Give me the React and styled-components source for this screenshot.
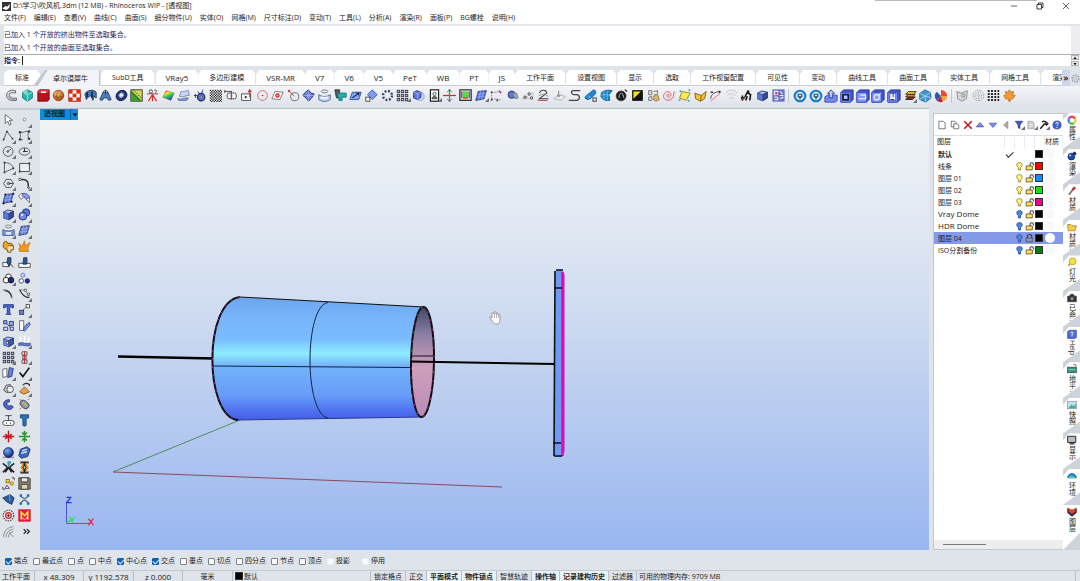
import React, { useState } from 'react';
import styled, { createGlobalStyle, css } from 'styled-components';

const GlobalStyle = createGlobalStyle`
  * {
    box-sizing: border-box;
  }

  body {
    margin: 0;
    overflow: hidden;
    font-family: 'Open Sans', 'Noto Sans CJK SC', sans-serif;
    font-size: 7px;
    line-height: 12px;
    color: #1c1c22;
  }

  button, input {
    font: inherit;
    color: inherit;
  }
`;

const Window = styled.div`
  display: flex;
  flex-direction: column;
  height: 100vh;
  background: #dfe3ea;
`;

const BareButton = styled.button`
  display: flex;
  align-items: center;
  justify-content: center;
  margin: 0;
  padding: 0;
  border: 0;
  background: none;
`;

/* Title bar and menu */

const TitleBar = styled.header`
  position: relative;
  display: flex;
  align-items: center;
  height: 12px;
  padding: 0 8px 0 2px;
  background: #fff;
`;

const Title = styled.h1`
  flex: 1;
  margin: 0 0 0 2px;
  font-size: 7px;
  font-weight: 400;
`;

const WindowButtons = styled.div`
  display: flex;
  gap: 14px;
`;

const Shade = styled.div`
  position: absolute;
  top: 0;
  left: 81%;
  width: 15%;
  height: 1px;
  background: #b9b9b9;
`;

const MenuBar = styled.nav`
  display: flex;
  gap: 8px;
  height: 14px;
  padding: 0 4px;
  border-bottom: 2px solid #e2e5e9;
  background: #fff;
`;

const MenuLink = styled.a`
  color: inherit;
  text-decoration: none;
  white-space: nowrap;
`;

/* Command area */

const CommandArea = styled.section`
  display: grid;
  grid-template-columns: 1fr 9px;
  margin-left: 4px;
  color: #1d2560;
  background: #fff;
`;

const History = styled.div`
  height: 28px;
  padding-top: 2px;
  line-height: 13px;
`;

const HistoryLine = styled.p`
  margin: 0;
`;

const HistoryScroll = styled.div`
  background: #ededef;
`;

const CommandRow = styled.label`
  display: flex;
  align-items: center;
  height: 12px;
  border-top: 1px solid #a9abb0;
  font-weight: 700;
`;

const CommandInput = styled.input`
  flex: 1;
  height: 9px;
  margin-left: 2px;
  padding: 0;
  border: 0;
  border-left: 1px solid #222;
  outline: 0;
`;

const Spinner = styled.div`
  display: flex;
  flex-direction: column;
  gap: 1px;
  padding: 0 1px 0 0;
  border-top: 1px solid #a9abb0;
`;

const SpinButton = styled(BareButton)`
  height: 5px;
  border: 1px solid #b4b4b4;
  background: #ececec;
`;

/* Tool tabs */

const TabBar = styled.nav`
  display: flex;
  height: 16px;
  margin: 4px 0 0 4px;
`;

const TabList = styled.div`
  display: flex;
  flex: 1;
  min-width: 0;
  overflow: hidden;
`;

const Tab = styled.button`
  flex: none;
  margin: 0 ${({ $latin }) => ($latin ? 0 : 1)}px 0 0;
  padding: 0 ${({ $latin }) => ($latin ? 10 : 11)}px;
  border: 0;
  border-bottom: 1px solid #c9cdd4;
  font-size: ${({ $latin }) => ($latin ? 8 : 7)}px;
  line-height: 15px;
  white-space: nowrap;
  background: #fff;
  clip-path: polygon(3px 0, calc(100% - 3px) 0, 100% 4px, 100% 100%, 0 100%, 0 4px);

  ${({ $active }) =>
    $active &&
    css`
      margin-left: -8px;
      padding: 0 11px 0 20px;
      border-right: 1px solid #c3c8d0;
      border-bottom: 0;
      background: linear-gradient(122deg, #c3c8d0 12px, #f1f3f6 13px);
      clip-path: polygon(12px 0, 100% 0, 100% 100%, 0 100%);
    `}
`;

const MoreTabs = styled(BareButton)`
  width: 8px;
  font-size: 8px;
  font-weight: 700;
  background: #cfd5e6;
`;

const TabSettings = styled(BareButton)`
  width: 10px;
`;

const Toolbar = styled.div`
  display: flex;
  align-items: center;
  height: 22px;
  padding: 0 0 3px 4px;
  background: linear-gradient(#f3f5f8, #dde1e8);
`;

const ToolGroup = styled.div`
  display: flex;
  flex: ${({ $count }) => $count} 1 0;
  min-width: 0;
`;

const Separator = styled.div`
  width: 1px;
  height: 14px;
  margin: 0 3px 0 2px;
  background: #c3c8d0;
`;

const ToolSpace = styled.div`
  flex: 4 1 0;
`;

const ToolButton = styled(BareButton)`
  position: relative;
  flex: 1 1 0;
  min-width: 0;

  ${({ $more }) =>
    $more &&
    css`
      &::after {
        content: '';
        position: absolute;
        right: 0;
        bottom: 0;
        border-bottom: 4px solid #6d7078;
        border-left: 4px solid transparent;
      }
    `}
`;

/* Work area */

const Work = styled.main`
  display: grid;
  grid-template-columns: 40px 1fr 4px 130px 17px;
  flex: 1;
  min-height: 0;
`;

const SideTools = styled.div`
  display: grid;
  grid-template-columns: 16px 16px;
  grid-auto-rows: 1fr;
  min-height: 0;
  padding: 2px 0 11px;
  border-top: 2px solid #c9ced7;
`;

const Viewport = styled.section`
  position: relative;
  min-height: 0;
  border-top: 1px solid #b9bfc9;
  background: linear-gradient(#f2f5f6, #e2e9f3 25%, #c6d5f0 55%, #98b6f0);
`;

const ViewTag = styled.div`
  position: absolute;
  top: 0;
  left: 0;
  display: flex;
  height: 11px;
  font-weight: 700;
  line-height: 10px;
  color: #06222f;
  background: #0b8edb;
`;

const ViewName = styled.span`
  padding: 0 5px 0 4px;
  border-right: 1px solid #0a5f96;
`;

const ViewMenu = styled(BareButton)`
  width: 7px;
`;

const Scene = styled.svg`
  display: block;
  width: 100%;
  height: 100%;
  font-family: 'Liberation Sans', sans-serif;
  font-size: 9px;
`;

/* Layers panel */

const Panel = styled.section`
  display: flex;
  flex-direction: column;
  min-width: 0;
  margin-top: 5px;
  border: 1px solid #c3c8d0;
  border-right: 0;
  background: #fff;
`;

const PanelTools = styled.div`
  display: flex;
  align-items: center;
  height: 22px;
  padding: 0 0 0 2px;
  border-bottom: 1px solid #dcdfe4;
`;

const LayerTable = styled.table`
  width: 100%;
  border-collapse: collapse;
  table-layout: fixed;
`;

const HeadCell = styled.th`
  height: 12px;
  width: ${({ $width }) => ($width ? `${$width}px` : 'auto')};
  padding: 0;
  font-weight: 400;
  text-align: left;
  white-space: nowrap;
  border-right: 1px solid #ececef;

  &:first-child {
    padding-left: 3px;
  }
`;

const LayerRow = styled.tr`
  font-weight: ${({ $current }) => ($current ? 700 : 400)};
  background: ${({ $selected }) => ($selected ? '#8499e8' : 'transparent')};
`;

const LayerCell = styled.td`
  height: 12px;
  padding: 0;
  line-height: 11px;
  white-space: nowrap;

  &:first-child {
    padding-left: 4px;
  }

  svg {
    display: block;
  }
`;

const Latin = styled.span`
  font-size: 8px;
`;

const Swatch = styled.span`
  display: block;
  width: 8px;
  height: 8px;
  border: 1px solid #333;
  background: ${({ $color }) => $color};
`;

const Material = styled.span`
  display: block;
  width: 10px;
  height: 10px;
  border-radius: 50%;
  background: ${({ $shown }) => ($shown ? '#fff' : '#f9f9fa')};
`;

const PanelScroll = styled.div`
  height: 9px;
  margin-top: auto;
  padding: 4px 0 0 9px;
  background: #eeeeee;
`;

const ScrollThumb = styled.div`
  width: 36%;
  height: 1px;
  background: #77797d;
`;

const PanelTabs = styled.nav`
  display: flex;
  flex-direction: column;
  margin-top: 5px;
  background: #ced3db;
`;

const PanelTab = styled.button`
  display: flex;
  flex: ${({ $active }) => ($active ? 1.29 : 1)} 1 0;
  flex-direction: column;
  align-items: center;
  gap: 1px;
  min-height: 0;
  padding: 2px 0 0;
  border: 0;
  background: #fff;
  clip-path: polygon(0 7px, 6px 0, 100% 0, 100% 66%, 0 100%);

  ${({ $active }) =>
    $active &&
    css`
      clip-path: polygon(0 0, 100% 0, 100% 62%, 0 100%);
    `}
`;

const PanelTabText = styled.span`
  writing-mode: vertical-rl;
  line-height: 10px;
  white-space: nowrap;
`;

/* Bottom bars */

const SnapBar = styled.div`
  display: flex;
  align-items: center;
  gap: 5px;
  height: 20px;
  padding: 2px 0 0 5px;
`;

const Snap = styled.label`
  display: flex;
  align-items: center;
  gap: 2px;
  margin-right: ${({ $last }) => ($last ? 7 : 0)}px;
`;

const SnapBox = styled.input`
  appearance: none;
  width: 7px;
  height: 7px;
  margin: 0;
  border: 1px solid ${({ $faded }) => ($faded ? '#eef0f3' : '#7d8086')};
  border-radius: 1px;
  background: #f8f9fa;

  &:checked {
    border-color: #0c62b8;
    background: #0c62b8;
  }

  &:checked::after {
    content: '';
    display: block;
    width: 5px;
    height: 3px;
    border: solid #d9ebff;
    border-width: 0 0 1px 1px;
    transform: rotate(-45deg);
  }
`;

const StatusBar = styled.footer`
  display: flex;
  height: 11px;
  padding-left: 0;
  border-top: 1px solid #c5c9d0;
  line-height: 11px;
`;

const StatusCell = styled.div`
  display: flex;
  align-items: center;
  justify-content: ${({ $left }) => ($left ? 'flex-start' : 'center')};
  gap: 1px;
  width: ${({ $width }) => $width}px;
  padding-left: ${({ $left }) => ($left ? 2 : 0)}px;
  border-right: 1px solid #b9bec7;
  font-size: ${({ $latin }) => ($latin ? 8 : 7)}px;
  white-space: nowrap;
`;

const StatusToggle = styled.button`
  margin: 0;
  padding: 0 3px;
  border: 0;
  border-right: 1px solid #b9bec7;
  font-weight: ${({ $on }) => ($on ? 700 : 400)};
  line-height: 11px;
  white-space: nowrap;
  background: ${({ $on }) => ($on ? '#e8f3f8' : 'transparent')};
`;

const Memory = styled.div`
  flex: 1;
  margin-right: 4px;
  padding-left: 2px;
  border-right: 1px solid #b9bec7;
`;

/* Icons */

const B = '#5b78d8';
const D = '#1c2a66';
const L = '#aebcf2';

const Icon = ({ size = 13, children }) => (
  <svg
    width={size}
    height={size}
    viewBox="0 0 16 16"
    fill="none"
    stroke="#333"
    strokeWidth="1"
    aria-hidden="true"
  >
    {children}
  </svg>
);

const Cube = ({ c = B, l = L, d = D }) => (
  <g stroke={d} strokeWidth=".7">
    <path d="M2 5 7 2.500l7 1.500v7l-6 3.500-6-2Z" fill={c} />
    <path d="m2 5 5-2.500L14 4 8.500 7Z" fill={l} />
    <path d="M8.500 7v7.500L14 11V4Z" fill={d} fillOpacity=".55" />
  </g>
);

const Mesh = ({ c = B }) => (
  <>
    <path d="M4 3l10-1-3 10-10 2Z" fill={c} stroke={D} />
    <path d="M3 6.500l10-1M2 10l10-1M7 2.500 4.500 13M11 2 8 12.500" stroke={L} strokeWidth=".7" />
  </>
);

const Plate = ({ children }) => (
  <>
    <path d="M1 4 4 1h11v11l-3 3H1Z" fill="#4255c8" stroke="#28348c" />
    <path d="M1 4h11v11H1Z" fill="#8797fb" stroke="#4155cc" />
    {children}
  </>
);

const Ball = ({ id, from, to, r = 6.500 }) => (
  <>
    <radialGradient id={id} cx=".35" cy=".3" r=".75">
      <stop offset="0" stopColor={from} />
      <stop offset="1" stopColor={to} />
    </radialGradient>
    <circle cx="8" cy="8" r={r} fill={`url(#${id})`} stroke={to} />
  </>
);

const dots = [3, 8, 13];
const DotGrid = ({ fill = L, stroke = '#333' }) =>
  dots.map((y) =>
    dots.map((x) => (
      <rect key={`${x}-${y}`} x={x - 1.500} y={y - 1.500} width="3" height="3" fill={fill} stroke={stroke} />
    )),
  );

const Checker = ({ step, color }) => {
  const cells = [];
  for (let y = 0; y * step < 14; y += 1) {
    for (let x = y % 2; x * step < 14; x += 2) {
      cells.push(
        <rect key={`${x}-${y}`} x={1 + x * step} y={1 + y * step} width={step} height={step} fill={color} stroke="none" />,
      );
    }
  }
  return <>{cells}</>;
};

const Target = () => (
  <>
    <circle cx="8" cy="8" r="6.500" fill="#2e9ae8" stroke="#1674c0" strokeWidth="1.500" />
    <circle cx="8" cy="8" r="4" fill="#d8f0ff" stroke="#fff" />
    <path d="M6 6h4v3H6ZM8 9v3" stroke="#28446c" strokeWidth="1.400" />
  </>
);

const mainTools = [
  ['管道', <><path d="M13 2C6 0 1 4 2 9c1 5 7 6 12 5v-3c-4 1-8 0-8.500-3S8 4 13 5Z" fill="#d5d6da" stroke="#55575c" /><path d="M4 9c1 3 4 4 9 4" stroke="#888" /></>],
  ['多面体', <><path d="M8 1 14 4v7l-6 4-6-4V4Z" fill="#27b7ab" stroke="#0e6f6b" /><path d="m2 4 6 3 6-3M8 7v8" stroke="#a5f0e6" /><path d="M8 1 2 4l6 3Z" fill="#83e2d6" stroke="none" /></>],
  ['红盒', <><path d="M1 3 3 1h12v12l-2 2H1Z" fill="#b5121d" stroke="#6c0b12" /><path d="M1 5h12l2-4H3Z" fill="#d9363d" stroke="none" /><path d="M5 3h6v2H5Z" fill="#fff" stroke="none" /></>],
  ['橙球', <><Ball id="orange" from="#ffc079" to="#9c4a0c" /><path d="M2 8c4 3 8 3 12 0M8 2c-3 4-3 8 0 12" stroke="#703408" strokeWidth=".7" /></>],
  ['棋盘', <><rect x="1" y="1" width="14" height="14" fill="#fff" stroke="#8e1508" /><Checker step={4.660} color="#e42b0b" /></>],
  ['布料', <><path d="M1 6c3-5 11-6 14-2v7l-3-2-1 5-3-6-4 3-1 2Z" fill="#4479b8" stroke="#142f58" /><path d="M4 4v6M10 3v7" stroke="#11284b" strokeWidth="2" /></>],
  ['罩壳', <><path d="M1 13 5 4h6l4 9-3 1-2-3H6l-2 3Z" fill="#4e80bd" stroke="#17325e" /><path d="M5 4c1-3 5-3 6 0M8 1v6" stroke="#17325e" /></>],
  ['圆环', <g transform="rotate(-35 8 8)"><ellipse cx="8" cy="8" rx="7" ry="6" fill="#273878" stroke="#101a44" /><ellipse cx="8" cy="7.500" rx="3" ry="2.600" fill="#e8ecfa" stroke="#8b9be2" /></g>],
  ['斑马纹', <><rect x="1" y="1" width="14" height="14" fill="#d8dc55" stroke="#222" /><path d="M1 1 15 15H1Z" fill="#439b37" stroke="none" /><path d="m2 4 10 10M4 1l11 11" stroke="#17350e" strokeDasharray="2 1" /></>],
  ['断面', <><path d="M1 6h14" stroke="#8b1f1f" /><path d="M3 15 8 7l5 8M8 7v8" stroke="#d23030" strokeWidth="1.500" /><circle cx="6" cy="3" r="2" /><path d="M10 2c2-2 4 0 2 2v1" /></>],
  ['曲率', <><linearGradient id="rain" x1="0" y1="0" x2=".5" y2="1"><stop offset="0" stopColor="#f12b1b" /><stop offset=".35" stopColor="#ffe42b" /><stop offset=".6" stopColor="#2cd851" /><stop offset="1" stopColor="#1b45ee" /></linearGradient><path d="m5 2 10 3-4 9L1 10Z" fill="url(#rain)" stroke="#a04a3c" strokeWidth=".6" /></>],
  ['展开', <><path d="M5 3c4 2 6-2 9-1l1 6c-4-1-6 3-12 1Z" fill="#c9d3f5" stroke="#6f7cb0" /><path d="M1 12c5 2 8-2 13-1l-2 3H2Z" fill="#8da3ea" stroke="#53639f" /></>],
  ['齿轮', <><circle cx="10" cy="10" r="4.500" fill={B} stroke={D} strokeWidth="1.500" /><circle cx="10" cy="10" r="1.500" fill="#fff" /><path d="M1 8h4M3 6v5M6 3l2 3M12 1l-1 4" stroke={D} /></>],
  ['网纹', <><rect x="1" y="1" width="14" height="14" fill="#eee" stroke="none" /><Checker step={1.550} color="#222" /></>],
  ['尺寸', <><rect x="4" y="5" width="11" height="7" rx="2" fill="#fff" /><path d="M1 3h9M1 1v4M9 3v10" /><circle cx="9" cy="8.500" r="1" stroke="#d33" /></>],
  ['移动', <><path d="M2 6h11v8H2Z" fill="#fff" /><path d="M12 10V2m-2 2 2-3 2 3" stroke="#c8252c" strokeWidth="1.300" /><circle cx="7" cy="10" r="1" fill="#333" /></>],
  ['圆', <><circle cx="8" cy="8" r="6" stroke="#dc4d57" /><circle cx="8" cy="8" r="1" fill="#b32430" stroke="none" /></>],
  ['中心', <><path d="m5 3 10 1-4 9-10-1Z" fill="#fff" stroke="#666" /><path d="M8 6a2 2 0 1 1-.1 0Z" fill="#f5b1b1" stroke="#d21f2c" strokeWidth="1.500" /></>],
  ['半径', <><circle cx="9.500" cy="9.500" r="5" stroke="#555" /><path d="m2 2 7 7" stroke="#cf2c2c" /><circle cx="2.500" cy="2.500" r="1.500" fill="#e33" stroke="none" /></>],
  ['交叉网格', <><path d="m8 1 3 4 4 1-3 5-4 4-3-4-4-3 3-4Z" fill={B} stroke={D} /><path d="M4 4l8 8M12 4l-8 8M8 1v14M1 8h14" stroke={L} strokeWidth=".8" /></>],
  ['圆柱线', <><ellipse cx="8" cy="3" rx="4" ry="1.800" stroke="#666" /><path d="M1 7c4 3 10 3 14 0v6c-4 3-10 3-14 0Z" fill="#c9d6f6" stroke="#3d528f" /><path d="M4 10c3 1 5 1 8 0" stroke="#fff" strokeWidth="2" /></>],
  ['三通', <><path d="M1 1h6v10H3Z" fill="#505b60" stroke="#333" /><path d="M5 5h10v5h-5v4H6v-4H4Z" fill="#21b0ac" stroke="#117572" /></>],
  ['平面', <><path d="M4 4h11l-3 9H1Z" fill="#7fa6ee" stroke="#27448c" /><path d="M4 11 12 5m-3 0h3v3" stroke="#122555" strokeWidth="1.300" /></>],
  ['菱形', <><path d="m9 1 6 6-6 6-6-6Z" fill="#7b9af0" stroke="#3e56a8" /><rect x="1" y="10" width="5" height="5" fill="#fff" /></>],
  ['环形阵列', <circle cx="8" cy="8" r="5.500" stroke="#3c435e" strokeWidth="3" strokeDasharray="2.300 2.020" />],
  ['矩形阵列', <DotGrid />, true],
  ['方块', <><circle cx="10" cy="9" r="5" fill="#cdd7f8" stroke="#8797d2" /><path d="M2 4 6 2l5 2v6l-4 3-5-2Z" fill={B} stroke={D} /><path d="m2 4 5 2 4-2M7 6v7" stroke={L} /></>],
  ['人像', <><rect x="3" y="1" width="10" height="14" fill="#fff" stroke="#222" strokeWidth="1.500" /><circle cx="8" cy="6" r="2" /><path d="M5 12c0-4 6-4 6 0Z" fill="#777" /></>, true],
  ['十字', <><path d="M0 8h16" stroke="#cb2f2f" strokeWidth="1.500" /><path d="M8 0v16" stroke="#2f9e3b" strokeWidth="1.500" /><path d="m5 4 3-3 3 3M5 12l3 3 3-3" stroke="#555" /></>],
  ['显示器', <><rect x="1" y="1" width="14" height="13" fill="#dcdcdc" stroke="#333" strokeWidth="1.500" /><rect x="4" y="3" width="8" height="8" fill="#4ee042" stroke="none" /><path d="M3 3v8M13 3v8" stroke="#b93bda" strokeWidth="2" /><path d="M5 11h6" stroke="#f04a20" strokeWidth="2" /></>],
  ['曲面网格', <Mesh />, true],
  ['曲线点', <><path d="M2 4C7 5 11 2 13 4M2 4v9c4-1 8-1 12 1" stroke="#777" strokeDasharray="2 1" /><path d="M2 3v2M2 12v2M9 13v2" strokeWidth="2" /><path d="m11 2 3 3" stroke="#c13bca" strokeWidth="2" /></>],
  ['球体', <><circle cx="7" cy="7" r="4.500" fill={B} stroke={D} /><path d="M8 5h5l2 6-4 1Z" fill="#9fa6b8" stroke="#777" /></>],
  ['控制点', <><path d="M1 12h13L15 4 8 9Z" stroke="#bbb" /><circle cx="5" cy="10" r="1.500" /><circle cx="10" cy="6" r="1.500" /><circle cx="13" cy="11" r="1.500" /></>],
  ['描绘', <><path d="M3 5c2-5 9-4 9 0L3 12h11" stroke="#444" strokeWidth="1.300" /><path d="m2 8 7-2 5 3" stroke="#888" /><path d="M1 14h12" stroke="#b22" /></>],
  ['投影', <><path d="m1 12 7-5 7 2-5 5Z" fill="#eee" stroke="#aaa" /><path d="M7 2v7m-2-2 2 3 2-3" stroke="#777" /></>],
  ['折线', <path d="M15 2H6c-3 1-2 4 1 5h4c4 1 4 6 0 7H1" stroke="#444" strokeWidth="1.500" />],
  ['画笔', <><path d="M12 1c3 1 3 3 2 5l-6 6-4 1-3-2 2-3Z" fill="#1f87d5" stroke="#12548f" /><path d="m5 8 3 3" stroke="#a5daff" /><rect x="11" y="11" width="4" height="4" fill="#fff" stroke="#111" /></>],
  ['蓝网', <><path d="M2 4c5-3 9-3 13-2l-4 5 1 7c-6 1-9-1-11-5Z" fill="#1c88ca" stroke="#14527e" /><path d="M1 8c4-2 7-1 11 0M4 3c1 4 1 7 1 10M9 2v12" stroke="#94d4f8" strokeWidth=".7" /></>],
  ['黑盘', <><circle cx="7.500" cy="8.500" r="6" fill="#181818" /><path d="M5 11c0-4 1-6 3-6s2 4 3 6" stroke="#ddd" /><path d="m12 1 3 2" stroke="#222" strokeWidth="1.500" /></>],
  ['黑黄', <><rect x="2" y="2" width="12" height="12" fill="#111" stroke="#111" /><path d="M3 3h9L3 12Z" fill="#f8e321" stroke="none" /></>],
  ['灯组', <><path d="M2 2h4v5H2ZM8 3l5-1v4M2 10l4-1v5H2Z" stroke="#666" fill="#ddd" /><path d="M9 7h4l2 6-4 2-3-2Z" fill="#e5b95c" stroke="#77684a" /></>],
  ['螺旋', <path d="M8 8c1-2-2-2-2 0 0 3 5 3 5-1 0-5-8-5-9 1-1 7 10 8 12 1l1-6" stroke="#d93f4f" />],
  ['黄板', <><path d="m5 3 10 2-5 9-8-3Z" fill="#ffe957" stroke="#897420" /><path d="M2 2l2 1M13 1l2 1M1 14l2-1M12 14l2 1" stroke="#14a7d3" strokeWidth="2" /></>],
  ['黄盒', <><path d="m1 5 8 3 6-5-2 9-5 3-6-3Z" fill="#f4c32f" stroke="#73540c" /><path d="M9 8 8 15" stroke="#73540c" /></>],
  ['切线', <><path d="M2 15 14 5" stroke="#df5d61" /><path d="M2 12C3 6 6 4 14 3" /><path d="M2 4h3M13 2v3" strokeWidth="2" /></>],
  ['弧形', <path d="M1 5c4-5 10-5 14 0M3 8c3-3 7-3 10 0M5 12c2-2 4-2 6 0" stroke="#b8bcc3" />],
  ['人物', <><path d="M3 8v6M1 11h5M9 4l-3 6M9 4l4 3-1 7M9 9l-2 5" stroke="#181818" strokeWidth="2" /><circle cx="10" cy="3" r="1.600" fill="#111" stroke="none" /><circle cx="3" cy="13" r="1" stroke="#c33" /></>],
  ['立方体', <Cube />],
  ['零件', <><rect x="1" y="1" width="14" height="14" fill="#6672c6" stroke="#6672c6" /><path d="M3 3h4v4H3ZM3 10h4v3H3M9 8h5M10 3l3 3M10 12l4-2" stroke="#eee" strokeWidth="1.500" /><circle cx="7" cy="7" r="2" stroke="#c33850" /></>],
];

const plugTools = [
  ['目标', <Target />],
  ['旋转', <Target />],
  ['底座', <><path d="M1 9 4 7h11v6l-2 2H1Z" fill="#7889ee" stroke="#3547aa" /><path d="M6 10V5H4l4-4 4 4h-2v5Z" fill="#b9c6fb" stroke="#26377e" /></>],
  ['边框', <><Plate /><path d="M3.500 6.500h6v6h-6Z" fill="#b8c2ff" stroke="#10183d" strokeWidth="2" /></>],
  ['开槽', <Plate><path d="M3 11h8V7H5" stroke="#e6ebff" strokeWidth="1.500" /></Plate>],
  ['开孔', <Plate><circle cx="6.500" cy="9.500" r="3" stroke="#e6ebff" strokeWidth="1.500" /><path d="M8 8 11 5" stroke="#fff" /></Plate>],
  ['保存', <Plate><path d="M3 5h7v8H3Z" fill="#e7ebff" stroke="#4155cc" /><path d="M7 5v4M4 12h4" stroke="#333" /></Plate>],
  ['图层', <><path d="m3 12 3-3h8l-3 3Z" fill="#9c301d" stroke="#222" /><path d="m3 9 3-3h8l-3 3H3Z" fill="#ef8820" stroke="#222" /><path d="m3 6 3-3h9l-3 3Z" fill="#fbd32b" stroke="#222" /></>, true],
  ['晶体', <><path d="m8 1 6 3 1 6-6 5-7-3V5Z" fill="#4594c8" stroke="#246691" /><path d="m2 5 6 3 6-4M8 8l1 7M2 12l6-4 7 2" stroke="#a8daf5" /></>],
  ['色轮', <><circle cx="8" cy="8" r="6.800" fill="#eee" stroke="none" /><path d="M8 8V1a7 7 0 0 1 7 7Z" fill="#e94b36" stroke="none" /><path d="M8 8h7a7 7 0 0 1-5 6.500Z" fill="#f5a23b" stroke="none" /><path d="m8 8 2 6.700A7 7 0 0 1 3 13Z" fill="#b02b4d" stroke="none" /><path d="m8 8-5 5A7 7 0 0 1 3 3Z" fill="#3158a8" stroke="none" /></>],
];

const extraTools = [
  ['修剪', <><path d="m1 3 5 2 8-3-1 10-6 3-5-3Z" fill="#d4d5d8" stroke="#888" /><circle cx="9" cy="8" r="2" stroke="#777" /></>],
  ['点阵球', <><circle cx="8" cy="8" r="6.500" stroke="#777" strokeDasharray="1 1" /><circle cx="8" cy="8" r="4" stroke="#777" strokeDasharray="1 1" /><circle cx="8" cy="8" r="1.500" stroke="#777" strokeDasharray="1 1" /></>],
  ['点阵', <g strokeWidth="1.300">{[2.500, 6.200, 9.900, 13.600].map((y) => <path key={y} d={`M1 ${y}h14`} stroke="#222" strokeWidth="2.300" strokeDasharray="2.300 1.700" />)}</g>],
  ['枫叶', <path d="m8 1 2 3 3-1-1 4 3 1-3 4-3 .5V15H7v-2.500L3 12 1 8l3-1-1-4 3 1Z" fill="#ef9a38" stroke="#c06e1c" />],
];

const sideTools = [
  ['选取', <path d="M4 2v11l3-3 2 5 2-1-2-5h4Z" fill="#fff" stroke="#555" />],
  ['点', <circle cx="8" cy="8" r="1.700" fill="#fff" stroke="#777" />, true],
  ['多段线', <><path d="m2 13 4-10 7 9" stroke="#444" /><path d="M1 13h2M5 3h2M12 12h2" strokeWidth="2" /></>, true],
  ['曲线', <><path d="M2 4C7 5 9 2 13 3c-1 4-1 7 1 9M2 4c2 4 1 6 0 9h4" stroke="#555" /><path d="M1 13h3M1 4h3M12 3h3M12 12h3" strokeWidth="2.500" /></>, true],
  ['圆形', <><circle cx="7.500" cy="8" r="6" stroke="#444" /><path d="m7 8 4-3" /><circle cx="7" cy="8" r="1" /></>, true],
  ['椭圆', <><ellipse cx="8" cy="8" rx="6.500" ry="4.500" stroke="#444" /><path d="M8 8h4M8 8V4M6 8h4" strokeWidth="1.300" /></>, true],
  ['圆弧', <><path d="M3 2v12L14 9C13 5 9 2 3 2Z" stroke="#444" /><path d="M2 2h2M2 14h2M13 9h2" strokeWidth="2" /></>, true],
  ['矩形', <><path d="M2 3h12v10H2Z" fill="#eceef2" /><path d="M1 13h2M13 3h2" strokeWidth="2.500" /></>, true],
  ['多边形', <><path d="m5 3 6 0 3 5-3 5H5L2 8Z" stroke="#444" /><path d="M8 8h6" /><circle cx="8" cy="8" r="1.500" /></>, true],
  ['圆角', <><path d="M1 3h5c6 0 7 4 7 11" strokeWidth="1.800" /><circle cx="2.500" cy="3" r="1.500" fill="#fff" /><circle cx="13" cy="13" r="1" fill="#fff" /></>, true],
  ['角点曲面', <><Mesh /><path d="M3 3h2M13 2h2M1 14h2M11 12h2" stroke="#111" strokeWidth="2" /></>, true],
  ['曲面圆角', <><path d="M1 5c2-4 8-5 13 1v7l-4-4c-1-3-4-3-6 0Z" fill="#fff" stroke="#555" /><path d="M6 2c5-1 8 2 8 5l-4 2c0-3-2-4-5-4Z" fill="#8d9cef" stroke="#4352a0" /></>, true],
  ['立方体', <Cube />, true],
  ['球', <><circle cx="10" cy="5.500" r="4.500" fill={B} stroke={D} /><circle cx="6" cy="10" r="4.800" fill="#7188e4" stroke={D} /><circle cx="5" cy="8.500" r="1.500" fill="#dfe6ff" stroke="none" /></>, true],
  ['挤出', <><ellipse cx="8" cy="3" rx="4" ry="1.700" stroke="#777" /><path d="M1 7c4 2 10 2 14 0v7H1Z" fill="#8297e6" stroke="#3d4d98" /><path d="M5 10h6v3H5Z" fill="#f2f5ff" stroke="none" /></>, true],
  ['曲面', <Mesh c="#6e83cc" />, true],
  ['组合', <><path d="M2 4c0-3 5-3 5 0h3c4 0 4 5 1 6-1 4-5 4-6 1-4 0-4-5-3-7Z" fill="#f2a51f" stroke="#5d3c09" /><path d="M8 7h6v5h-3v3H7v-3" fill="#ffe0a2" stroke="#5d3c09" /></>],
  ['炸开', <path d="m1 4 4 4 3-7 1 6 6-4-3 7 1 4H2l-1-4 2-1Z" fill="#f49a16" stroke="#b86a08" strokeWidth=".8" />],
  ['修剪', <><path d="M1 8h7v5H1Z" fill="#fff" /><path d="M7 2h4v6l-2 5-3-5Z" fill="#2c5794" stroke="#163059" /><path d="m10 9 4 5" /></>],
  ['分割', <><path d="M1 9h14v5H1Z" fill="#fff" /><path d="M7 2h4v8H6Z" fill="#2c5794" stroke="#163059" /></>],
  ['群组', <><circle cx="8" cy="6" r="3.500" fill="#fff" stroke="#111" /><circle cx="5" cy="10" r="3.500" fill="#fff" stroke="#111" /><circle cx="11" cy="10" r="3.500" fill="#1b2780" stroke="#111" /></>, true],
  ['解散群组', <><circle cx="6" cy="4" r="2.500" fill="#c2ccff" stroke="#6675b5" /><circle cx="4" cy="11" r="2.700" fill="#fff" /><circle cx="11.500" cy="11" r="2.700" fill="#232f92" stroke="#141c58" /></>],
  ['弧线', <><path d="M2 4c6 0 9 3 10 9" strokeWidth="1.800" /><path d="M1 4h3M11 13h2" stroke="#999" strokeWidth="2" /></>],
  ['编辑点', <><path d="M2 3c3 7 6 10 12 10" strokeWidth="1.500" /><path d="m2 3 7 1 5 9" stroke="#888" /><circle cx="9" cy="4" r="1.500" fill="#fff" /><circle cx="13" cy="9" r="1.500" fill="#fff" /></>, true],
  ['文字', <path d="M2 2h12v4h-1.500L11 4.500H9.500v8L11 14H5l1.500-1.500v-8H5L3.500 6H2Z" fill="#4a66d8" stroke="#1c2f80" />],
  ['移动', <><rect x="10" y="2" width="4" height="4" fill="#fff" /><rect x="2" y="9" width="5" height="5" fill="#6a7fe4" /><path d="m6 9 4-4" strokeDasharray="2 1" /></>, true],
  ['复制', <><path d="M2 2h4v4H2ZM9 3h5v5H9Z" fill="#95a6f2" stroke={D} /><path d="M2 10h5v4H2ZM10 10h4v4h-4Z" fill="#d2dafc" stroke={D} /><path d="m6 6 4 4" /></>],
  ['旋转', <><path d="M2 2h5v12H2Z" fill="#fff" stroke="#555" /><path d="m9 8 5-4 1 3-7 8-2-1Z" fill="#7890ea" stroke="#3b4b92" /></>],
  ['实体', <><Cube c="#6f98e6" /><path d="M5 8h3v3H5Z" fill="#fff" stroke="#335" /></>, true],
  ['投射', <><path d="M3 2v8M8 1v9M13 2v8" stroke="#fff" strokeWidth="2" /><path d="M1 10c5-2 9 2 14 0v3c-5 2-9-2-14 0Z" fill="#5f78d6" stroke="#3b4b92" /></>, true],
  ['阵列', <DotGrid />, true],
  ['对齐', <><path d="M5 1h6v4H5ZM6 6h4v4H6ZM5 11h6v4H5Z" fill="#fff" /><path d="M8 0v16" stroke="#c33" strokeWidth="1.500" /></>, true],
  ['镜像', <><path d="m1 4 5-1v10l-5 1Z" fill="#fff" stroke="#555" /><path d="m9 2 5 1-2 10-5 1Z" fill="#6880d2" stroke="#26357c" /></>, true],
  ['检查', <path d="m2 8 4 5L14 2" stroke="#111" strokeWidth="2" />, true],
  ['布尔', <><path d="M2 10 5 4l5-1 3 4-1 5-6 1Z" fill="#bfc1c5" stroke="#444" /><circle cx="10" cy="9" r="4" fill="#ececee" stroke="#444" /></>, true],
  ['锥体', <><path d="m8 6 6 6-7 3-5-3Z" fill="#e9a441" stroke="#7a4d11" /><path d="M6 4c2-3 5-3 8-1v2" strokeWidth="1.500" /></>, true],
  ['弯管', <><path d="M9 2C2 2 0 8 4 12s8 2 10-1l-3-2c-2 2-5 0-5-2s1-2 3-2Z" fill="#4b62c6" stroke="#1f2e7c" /></>],
  ['胶囊', <><rect x="2" y="4" width="12" height="8" rx="4" transform="rotate(40 8 8)" fill="#7f9cc4" stroke="#444" /><path d="m6 5 5 5" stroke="#e5b12d" strokeWidth="2" /><path d="M2 2l2 1M12 2l2-1M2 14l2-2" stroke="#d33" /></>],
  ['展平', <><path d="M4 2h8M8 2v6" /><rect x="1" y="8" width="14" height="6" rx="3" fill="#fff" /><path d="M5 11h1M10 11h1" strokeWidth="2" /></>],
  ['螺栓', <path d="M3 1h10v4h-3v9l-2 1-2-1V5H3Z" fill="#2876b8" stroke="#14426c" />],
  ['左右', <path d="M8 1v14M1 8h5M4 5l3 3-3 3M15 8h-5M12 5 9 8l3 3" stroke="#c7131b" strokeWidth="1.800" />],
  ['上下', <path d="M1 8h14M8 1v5M5 3l3 3 3-3M8 15v-5M5 13l3-3 3 3" stroke="#269233" strokeWidth="1.800" />],
  ['渲染球', <><path d="M1 13h14v2H1Z" fill="#999" stroke="none" /><Ball id="navy" from="#74aefc" to="#0a1f6e" r={6} /></>],
  ['纸张', <><path d="m3 4 8-3 4 3-3 9-8 2-3-3Z" fill="#3c69c0" stroke="#1c2f5d" /><path d="m5 6 6-2M4 9l7-2" stroke="#e4edff" strokeWidth="1.500" /></>],
  ['工字', <><path d="m1 3 5 4v2l-5 5M15 3l-5 4v2l5 5M4 14l4-6 4 6" strokeWidth="1.800" stroke="#222" /><path d="M7 1h4l-3 6Z" fill="#2b9bd8" stroke="#2b9bd8" /></>],
  ['弹簧', <><path d="M3 2h4v3L5 8l2 3v3H3M13 2H9v3l2 3-2 3v3h4" stroke="#222" strokeWidth="3" /><path d="M4 3h2v3L4 8l2 2v3H4M12 3h-2v3l2 2-2 2v3h2" stroke="#f6a42a" strokeWidth="1.500" /></>],
  ['框选', <><path d="M1 15v-3M1 15h3M15 1h-3M15 1v3" /><rect x="5" y="3" width="4" height="4" fill="#f8d22d" stroke="#8a6d0c" /><circle cx="12" cy="8" r="2" fill="#f8d22d" stroke="#8a6d0c" /><path d="m6 10 3 4H4Z" fill="#fff" /></>],
  ['软盘', <><path d="M1 1h13l1 1v13H1Z" fill="#8a876a" stroke="#333" /><path d="M4 1h8v5H4Z" fill="#eee" /><path d="M4 9h8v6H4Z" fill="#d8d6c3" /></>],
  ['蓝面', <><path d="m1 6 9-4 5 4-3 8-6-3Z" fill="#2b5ea1" stroke="#132f58" /><path d="m9 2 1 8" stroke="#79aee8" /></>],
  ['连线', <><path d="M3 3c3 5 7 5 10 0M3 14c3-7 7-7 10 0" stroke="#46617e" strokeWidth="1.500" /><path d="M2 3h3M11 3h3M2 13h3M11 13h3" stroke="#1676c4" strokeWidth="3" /></>],
  ['旋钮', <><circle cx="8" cy="8" r="6.500" fill="#eee" stroke="#555" strokeDasharray="2 1" strokeWidth="1.500" /><circle cx="8" cy="8" r="3.500" fill="#f8b6b4" stroke="#c9292e" strokeWidth="1.500" /><circle cx="8" cy="8" r="1" fill="#333" /></>],
  ['插件', <><rect x="1" y="1" width="14" height="14" fill="#f0173f" stroke="#d3102f" /><path d="M4 13V4l4 4 4-4v9" stroke="#ffe34f" strokeWidth="2" /><path d="m4 10 4 3 4-3" stroke="#fff" /></>],
  ['偏移', <path d="M2 15C2 8 6 3 14 2M5 15c0-5 3-9 9-10M8 15c0-4 2-6 6-7M9 9l5 6" stroke="#777" />],
  ['更多', <path d="m7 5 3 3-3 3M11 5l3 3-3 3" stroke="#222" strokeWidth="1.500" />],
];

const panelTools = [
  ['新建', <path d="M3 2h7l3 3v9H3Z" fill="#fff" />],
  ['复制图层', <><path d="M2 2h6l2 2v7H2Z" fill="#fff" /><path d="M6 6h5l3 2v6H6Z" fill="#fff" /></>],
  ['删除', <path d="m2 2 12 12M14 2 2 14" stroke="#c51622" strokeWidth="2.500" />],
  ['上移', <path d="m8 4 6 7H2Z" fill="#7c8df0" stroke="#3444a0" />],
  ['下移', <path d="m8 12 6-7H2Z" fill="#7c8df0" stroke="#3444a0" />],
  ['左移', <path d="M11 2v12L4 8Z" fill="#aaa" stroke="#888" />],
  ['筛选', <path d="M2 2h12l-4.500 6v6L6.500 12V8Z" fill="#4259c6" stroke="#22317e" />, true],
  ['报告', <><path d="M3 2h7l3 3v9H3Z" fill="#ccc" stroke="#999" /><path d="M5 7h6M5 10h6" stroke="#fff" /></>, true],
  ['工具', <path d="m2 14 7-8M5 3c3-2 6-1 9 3l-2 2-3-3" stroke="#222" strokeWidth="2.500" />, true],
  ['帮助', <><circle cx="8" cy="8" r="6.500" fill="#3c5fd4" stroke="#23398f" /><path d="M6 6c0-3 4-3 4 0 0 1-2 1.500-2 3.500M8 11v2" stroke="#fff" strokeWidth="1.500" /></>],
];

const panelTabs = [
  ['属性', <g strokeWidth="3.500"><path d="M8 2.500A5.500 5.500 0 0 1 13 6" stroke="#ee4b2d" /><path d="M13 6a5.500 5.500 0 0 1-2 7" stroke="#e8cf2c" /><path d="M11 13a5.500 5.500 0 0 1-7-1" stroke="#3fc43c" /><path d="M4 12a5.500 5.500 0 0 1-1-6" stroke="#3388e0" /><path d="M3 6a5.500 5.500 0 0 1 5-3.500" stroke="#b83ccd" /></g>],
  ['渲染', <><circle cx="7" cy="9" r="5.500" fill="#204caa" stroke="#0b1b4e" /><circle cx="12" cy="4" r="2.500" fill="#222b50" /><circle cx="5" cy="7" r="1.500" fill="#cfe4ff" stroke="none" /></>],
  ['材质', <><path d="m3 14 7-9" stroke="#777" strokeWidth="3" /><path d="m9 6 4-4" stroke="#c63838" strokeWidth="4" /></>],
  ['材质…', <path d="M1 4h5l2 2h7l-2 8H2Z" fill="#f5cc4b" stroke="#8a6714" />],
  ['灯光', <><circle cx="9" cy="7" r="5.500" fill="#f7e13c" stroke="#a98d14" /><path d="m5 11-3 3" strokeWidth="2.500" stroke="#b9a023" /></>],
  ['已命…', <><path d="M1 5h3l2-3h4l2 3h3v9H1Z" fill="#333" /><circle cx="8" cy="9" r="3" fill="#999" /></>],
  ['Help', <><path d="M1 4 4 2h11v11l-2 2H1Z" fill="#4f6bd5" stroke="#2a3f96" /><path d="M6 7c0-3 4-3 4 0 0 1-2 1-2 3v2" stroke="#fff" strokeWidth="1.500" /></>],
  ['地平…', <><rect x="1" y="5" width="14" height="9" fill="#3b8f86" stroke="#2d3b42" /><path d="M3 9h10" stroke="#6fd07f" strokeWidth="2" /><path d="M10 1h4v3" /></>],
  ['快照', <><rect x="1" y="2" width="14" height="12" fill="#bfe2f0" stroke="#888" /><path d="m2 13 5-6 3 3 4-4v7Z" fill="#46ae8f" stroke="none" /></>],
  ['显示', <><path d="M1 2h13v10H1Z" fill="#b8bbc2" stroke="#222" strokeWidth="1.500" /><path d="M4 14h8M8 12v3" strokeWidth="2" /></>],
  ['环境', <><path d="M1 11a7 7 0 0 1 14 0Z" fill="#2b85d8" stroke="#1a5590" /><path d="M2 11c3-4 8-4 12 0Z" fill="#3fd5a4" stroke="none" /></>],
  ['图层', <><path d="m1 3 7 5 7-5v6l-7 6-7-6Z" fill="#222b6c" /><path d="m1 2 7 3 7-3-2 6-5 3-5-3Z" fill="#ee4527" stroke="#8b1b0c" /></>],
];

const menus = [
  '文件(F)', '编辑(E)', '查看(V)', '曲线(C)', '曲面(S)', '细分物件(U)', '实体(O)', '网格(M)',
  '尺寸标注(D)', '变动(T)', '工具(L)', '分析(A)', '渲染(R)', '面板(P)', 'BG螺栓', '说明(H)',
];

const tabs = [
  '标准', '卓尔谟犀牛', 'SubD工具', 'VRay5', '多边形建模', 'VSR-MR', 'V7', 'V6', 'V5', 'PeT', 'WB',
  'PT', 'JS', '工作平面', '设置视图', '显示', '选取', '工作视窗配置', '可见性', '变动', '曲线工具',
  '曲面工具', '实体工具', '网格工具', '渲染工具',
];

const layers = [
  { name: '默认', color: '#000', current: true },
  { name: '线条', color: '#f00', on: true },
  { name: '图层 01', color: '#0a90ff', on: true },
  { name: '图层 02', color: '#1fdc12', on: true },
  { name: '图层 03', color: '#f5008c', on: true },
  { name: 'Vray Dome', color: '#000' },
  { name: 'HDR Dome', color: '#000' },
  { name: '图层 04', color: '#000', selected: true, locked: true },
  { name: 'ISO分割备份', color: '#0a7a12' },
];

const snaps = ['端点', '最近点', '点', '中点', '中心点', '交点', '垂点', '切点', '四分点', '节点', '顶点', '投影', '停用'];
const activeSnaps = ['端点', '中心点', '交点'];

const toggles = [
  ['锁定格点'], ['正交'], ['平面模式', true], ['物件锁点', true], ['智慧轨迹'],
  ['操作轴', true], ['记录建构历史', true], ['过滤器'],
];

const isLatin = (text) => /^[\x20-\x7e]+$/.test(text);

const Tools = ({ items, size }) =>
  items.map(([label, drawing, more], i) => (
    // eslint-disable-next-line react/no-array-index-key
    <ToolButton key={`${label}-${i}`} type="button" aria-label={label} $more={more}>
      <Icon size={size}>{drawing}</Icon>
    </ToolButton>
  ));

const Bulb = ({ on }) => (
  <Icon size={9}>
    <path
      d="M8 1c6 0 6 6 2 9v4H6v-4C2 7 2 1 8 1Z"
      fill={on ? '#fff08a' : '#4d86dc'}
      stroke={on ? '#8f7a20' : '#2a4a8c'}
      strokeWidth="1.5"
    />
  </Icon>
);

const Lock = ({ locked }) => (
  <Icon size={9}>
    <path d={locked ? 'M4 7V4c0-4 8-4 8 0v3' : 'M9 7V4c0-4 6-3 6 0v2'} strokeWidth="1.8" />
    <path d="M2 7h11v7H2Z" fill={locked ? '#6f9be8' : '#ffe15e'} stroke="#5c4f1e" strokeWidth="1.5" />
  </Icon>
);

const Model = () => (
  <Scene viewBox="40 109 889 441" preserveAspectRatio="xMidYMid slice" role="img" aria-label="模型">
    <defs>
      <linearGradient id="body" x1="0" y1="0" x2="0" y2="1">
        <stop offset="0" stopColor="#6aa5ee" />
        <stop offset=".16" stopColor="#78b4fb" />
        <stop offset=".34" stopColor="#79bcff" />
        <stop offset=".46" stopColor="#8eecff" />
        <stop offset=".56" stopColor="#74b3fb" />
        <stop offset=".8" stopColor="#679cf8" />
        <stop offset=".93" stopColor="#4e70f0" />
        <stop offset="1" stopColor="#435ee0" />
      </linearGradient>
      <linearGradient id="inside" x1="0" y1="0" x2="0" y2="1">
        <stop offset="0" stopColor="#3f4766" />
        <stop offset=".25" stopColor="#8c7ea4" />
        <stop offset=".55" stopColor="#cf9fbd" />
        <stop offset="1" stopColor="#b98cb6" />
      </linearGradient>
    </defs>

    <path d="m113 472 127-52" stroke="#4f8d5c" fill="none" />
    <path d="m113 472 389 15" stroke="#8c4a5c" fill="none" />
    <path d="m118 356.500 96 2" stroke="#000" strokeWidth="2.400" />

    <path
      d="M240 297 424 307C408 315 408 408 422 417L238 420C204 417 203 301 240 297Z"
      fill="url(#body)"
    />
    <path d="M240 297 424 307" stroke="#111" />
    <path d="M238 420 422 417" stroke="#2a3a94" />
    <path d="M212 366 411 367.500" stroke="#0f2440" />
    <path d="M328 302.500C304 306 304 414 328 418" stroke="#0f2440" fill="none" />
    <path d="M240 297C203 301 204 417 238 420" stroke="#111" strokeWidth="2" fill="none" />
    <path d="M240 297C203 301 204 417 238 420" stroke="#b0209a" strokeWidth="1" strokeDasharray="2 6" fill="none" />
    <ellipse cx="422.500" cy="362" rx="11.500" ry="55" fill="url(#inside)" stroke="#111" strokeWidth="2" transform="rotate(1 422.500 362)" />
    <ellipse cx="422.500" cy="362" rx="11.500" ry="55" fill="none" stroke="#b0209a" strokeDasharray="2 7" transform="rotate(1 422.500 362)" />
    <path d="M411 356h22" stroke="#111" />
    <path d="m411 361.500 144 2.500" stroke="#000" strokeWidth="2" />

    <path d="M555 272c1-3 7-3 9 0v183c-2 3-8 3-10 0Z" fill="#6d9af2" />
    <path d="M562.500 272v184" stroke="#ef00b8" strokeWidth="2.500" />
    <path d="M564 274v178" stroke="#a01fc0" />
    <path d="M555 271 554 456" stroke="#111" strokeWidth="1.600" />
    <path d="M554 288h8M553 443h8M556 270h7M554 456h8" stroke="#111" strokeWidth="1.600" />

    <path
      d="M491 319c-3-2 0-3 1-1v-4c0-2 2-2 2 0v-1c0-2 2-2 2 0v1c0-2 2-1 2 0v1c1-1 2-1 2 1 0 4 0 8-3 8-4 0-4-2-6-5Z"
      fill="#fff"
      stroke="#777"
      strokeWidth=".7"
    />
    <path d="M494.500 314v4M496.500 314v4M498.500 315v3" stroke="#888" strokeWidth=".6" />

    <path d="M66.500 502v21.500" stroke="#4a55cc" />
    <path d="M66 523.500h23" stroke="#b5455e" />
    <path d="m66 523 5-3" stroke="#2bd04a" />
    <g strokeWidth=".4">
      <text x="66" y="503" fill="#2530d8" stroke="#2530d8">Z</text>
      <text x="69" y="523" fill="#21e03a" stroke="#21e03a">Y</text>
      <text x="88" y="525" fill="#e31b2c" stroke="#e31b2c">X</text>
    </g>
  </Scene>
);

const App = () => {
  const [tab, setTab] = useState('卓尔谟犀牛');
  const [panel, setPanel] = useState(11);

  return (
    <Window>
      <GlobalStyle />
      <TitleBar>
        <Icon size={9}>
          <rect x="0" y="0" width="16" height="16" fill="#333" stroke="none" />
          <path d="M1 12c2-5 4-2 6-6l2 3 5-6-1 7-5 4Z" fill="#fff" stroke="none" />
        </Icon>
        <Title>D:\学习\吹风机.3dm (12 MB) - Rhinoceros WIP - [透视图]</Title>
        <WindowButtons>
          <BareButton type="button" aria-label="最小化">
            <Icon size={12}><path d="M4 8h8" /></Icon>
          </BareButton>
          <BareButton type="button" aria-label="还原">
            <Icon size={12}><path d="M4 6h6v6H4ZM6 6V4h6v6h-2" strokeWidth="1.3" /></Icon>
          </BareButton>
          <BareButton type="button" aria-label="关闭">
            <Icon size={12}><path d="m4 4 8 8M12 4l-8 8" /></Icon>
          </BareButton>
        </WindowButtons>
        <Shade />
      </TitleBar>
      <MenuBar>
        {menus.map((item) => (
          <MenuLink key={item} href="#menu">{item}</MenuLink>
        ))}
      </MenuBar>

      <CommandArea>
        <History>
          <HistoryLine>已加入 1 个开放的挤出物件至选取集合。</HistoryLine>
          <HistoryLine>已加入 1 个开放的曲面至选取集合。</HistoryLine>
        </History>
        <HistoryScroll />
        <CommandRow>
          指令:
          <CommandInput type="text" />
        </CommandRow>
        <Spinner>
          <SpinButton type="button" aria-label="上一条">
            <Icon size={4}><path d="m8 3 6 9H2Z" fill="#222" /></Icon>
          </SpinButton>
          <SpinButton type="button" aria-label="下一条">
            <Icon size={4}><path d="m8 13 6-9H2Z" fill="#222" /></Icon>
          </SpinButton>
        </Spinner>
      </CommandArea>

      <TabBar>
        <TabList>
          {tabs.map((name) => (
            <Tab
              key={name}
              type="button"
              $latin={isLatin(name)}
              $active={name === tab}
              onClick={() => setTab(name)}
            >
              {name}
            </Tab>
          ))}
        </TabList>
        <MoreTabs type="button">»</MoreTabs>
        <TabSettings type="button" aria-label="设置">
          <Icon size={9}>
            <circle cx="8" cy="8" r="6" stroke="#9a9ea8" strokeWidth="2.5" strokeDasharray="3 1.5" />
            <circle cx="8" cy="8" r="2.5" stroke="#9a9ea8" />
          </Icon>
        </TabSettings>
      </TabBar>
      <Toolbar>
        <ToolGroup $count={50}><Tools items={mainTools} /></ToolGroup>
        <Separator />
        <ToolGroup $count={10}><Tools items={plugTools} size={14} /></ToolGroup>
        <Separator />
        <ToolGroup $count={4}><Tools items={extraTools} /></ToolGroup>
        <ToolSpace />
      </Toolbar>

      <Work>
        <SideTools><Tools items={sideTools} /></SideTools>
        <Viewport>
          <Model />
          <ViewTag>
            <ViewName>透视图</ViewName>
            <ViewMenu type="button" aria-label="视图菜单">
              <Icon size={6}><path d="m8 12 6-8H2Z" fill="#111" /></Icon>
            </ViewMenu>
          </ViewTag>
        </Viewport>
        <div />
        <Panel>
          <PanelTools><Tools items={panelTools} size={10} /></PanelTools>
          <LayerTable>
            <thead>
              <tr>
                <HeadCell>图层</HeadCell>
                <HeadCell $width={10} />
                <HeadCell $width={10} />
                <HeadCell $width={10} />
                <HeadCell $width={10} />
                <HeadCell $width={18}>材质</HeadCell>
              </tr>
            </thead>
            <tbody>
              {layers.map((layer) => (
                <LayerRow key={layer.name} $current={layer.current} $selected={layer.selected}>
                  <LayerCell>
                    {isLatin(layer.name) ? <Latin>{layer.name}</Latin> : layer.name}
                  </LayerCell>
                  <LayerCell>
                    {layer.current && (
                      <Icon size={9}><path d="m2 8 4 5 9-9" stroke="#111" strokeWidth="1.8" /></Icon>
                    )}
                  </LayerCell>
                  <LayerCell>{!layer.current && <Bulb on={layer.on} />}</LayerCell>
                  <LayerCell>{!layer.current && <Lock locked={layer.locked} />}</LayerCell>
                  <LayerCell><Swatch $color={layer.color} /></LayerCell>
                  <LayerCell><Material $shown={layer.selected} /></LayerCell>
                </LayerRow>
              ))}
            </tbody>
          </LayerTable>
          <PanelScroll><ScrollThumb /></PanelScroll>
        </Panel>
        <PanelTabs>
          {panelTabs.map(([name, drawing], i) => (
            <PanelTab key={name} type="button" $active={i === panel} onClick={() => setPanel(i)}>
              <Icon size={10}>{drawing}</Icon>
              <PanelTabText>{name}</PanelTabText>
            </PanelTab>
          ))}
        </PanelTabs>
      </Work>

      <SnapBar>
        {snaps.map((name, i) => (
          <Snap key={name} $last={i > 10}>
            <SnapBox type="checkbox" defaultChecked={activeSnaps.includes(name)} $faded={i > 10} />
            {name}
          </Snap>
        ))}
      </SnapBar>
      <StatusBar>
        <StatusCell $width={35} $left>工作平面</StatusCell>
        <StatusCell $width={49} $latin>x 48.309</StatusCell>
        <StatusCell $width={50} $latin>y 1192.578</StatusCell>
        <StatusCell $width={49} $latin>z 0.000</StatusCell>
        <StatusCell $width={50}>毫米</StatusCell>
        <StatusCell $width={138} $left><Swatch $color="#000" />默认</StatusCell>
        {toggles.map(([name, on]) => (
          <StatusToggle key={name} type="button" $on={on}>{name}</StatusToggle>
        ))}
        <Memory>可用的物理内存: 9709 MB</Memory>
      </StatusBar>
    </Window>
  );
};

export default App;
